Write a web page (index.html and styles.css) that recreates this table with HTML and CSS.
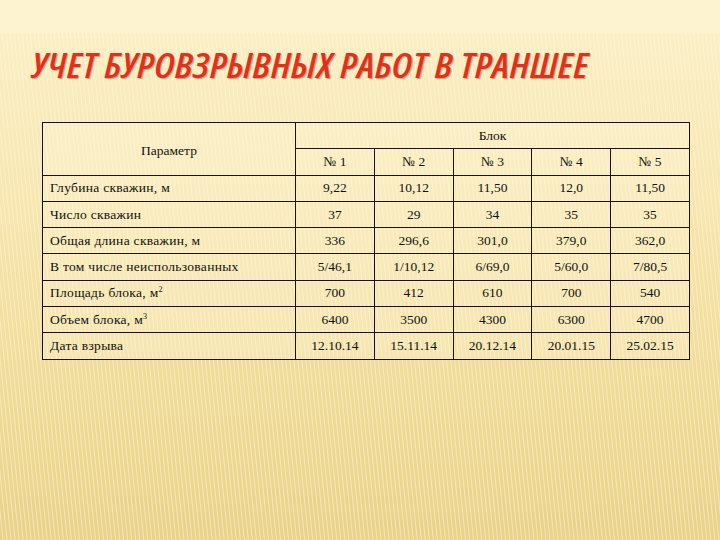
FILE: index.html
```html
<!DOCTYPE html>
<html lang="ru">
<head>
<meta charset="utf-8">
<title>Учет буровзрывных работ в траншее</title>
<link rel="stylesheet" href="styles.css">
</head>
<body>
<div class="slide">
  <h1 class="title">УЧЕТ БУРОВЗРЫВНЫХ РАБОТ В ТРАНШЕЕ</h1>
  <table class="data">
    <colgroup>
      <col class="c-param">
      <col class="c-num">
      <col class="c-num">
      <col class="c-num">
      <col class="c-num">
      <col class="c-num">
    </colgroup>
    <thead>
      <tr>
        <th rowspan="2" class="param-head">Параметр</th>
        <th colspan="5">Блок</th>
      </tr>
      <tr>
        <th>№ 1</th><th>№ 2</th><th>№ 3</th><th>№ 4</th><th>№ 5</th>
      </tr>
    </thead>
    <tbody>
      <tr><td class="label">Глубина скважин, м</td><td>9,22</td><td>10,12</td><td>11,50</td><td>12,0</td><td>11,50</td></tr>
      <tr><td class="label">Число скважин</td><td>37</td><td>29</td><td>34</td><td>35</td><td>35</td></tr>
      <tr><td class="label">Общая длина скважин, м</td><td>336</td><td>296,6</td><td>301,0</td><td>379,0</td><td>362,0</td></tr>
      <tr><td class="label">В том числе неиспользованных</td><td>5/46,1</td><td>1/10,12</td><td>6/69,0</td><td>5/60,0</td><td>7/80,5</td></tr>
      <tr><td class="label">Площадь блока, м<sup>2</sup></td><td>700</td><td>412</td><td>610</td><td>700</td><td>540</td></tr>
      <tr><td class="label">Объем блока, м<sup>3</sup></td><td>6400</td><td>3500</td><td>4300</td><td>6300</td><td>4700</td></tr>
      <tr><td class="label">Дата взрыва</td><td>12.10.14</td><td>15.11.14</td><td>20.12.14</td><td>20.01.15</td><td>25.02.15</td></tr>
    </tbody>
  </table>
</div>
</body>
</html>
```
FILE: styles.css
```css
html, body {
  margin: 0;
  padding: 0;
}
body {
  width: 720px;
  height: 540px;
  overflow: hidden;
  background-color: #f6e4a8;
  background-image:
    repeating-linear-gradient(84deg, rgba(255,255,255,0) 0px, rgba(255,255,255,0) 2px, rgba(255,250,225,0.5) 3px, rgba(255,255,255,0) 4px),
    linear-gradient(180deg, #fdf3d0 0px, #fdf3d0 32px, #fbeec4 33px, #f7e6b0 200px, #f0db98 380px, #e9d28a 540px);
  background-size: 100% 508px, 100% 100%;
  background-position: 0 32px, 0 0;
  background-repeat: no-repeat;
}
.slide {
  padding: 45px 0 0 0;
}
.title {
  margin: 0 0 37px 32px;
  font-family: "Open Sans", "DejaVu Sans Condensed", sans-serif;
  font-stretch: condensed;
  font-style: italic;
  font-weight: 600;
  font-size: 35px;
  line-height: 40px;
  color: #e2301a;
  text-shadow: 1px 1px 0 rgba(140, 30, 10, 0.35);
  letter-spacing: 0.5px;
  white-space: nowrap;
  transform: scaleX(1.12);
  transform-origin: left center;
}
.data {
  margin-left: 42px;
  width: 647px;
  border-collapse: collapse;
  table-layout: fixed;
  font-family: "Liberation Serif", "Times New Roman", serif;
  font-size: 13.5px;
  color: #111;
}
.c-param { width: 253px; }
.c-num { width: 78.8px; }
.data th, .data td {
  border: 1px solid #1a1208;
  height: 25.3px;
  padding: 0;
  text-align: center;
  vertical-align: middle;
  font-family: "Liberation Serif", "Times New Roman", serif;
  font-size: 13.5px;
  font-weight: normal;
  background: rgba(255, 248, 222, 0.3);
  white-space: nowrap;
}
.data .param-head {
  padding-top: 4px;
}
.data td.label {
  text-align: left;
  padding-left: 7px;
  letter-spacing: 0.3px;
}
.data sup {
  font-size: 8px;
  line-height: 0;
  letter-spacing: 0;
}
```
